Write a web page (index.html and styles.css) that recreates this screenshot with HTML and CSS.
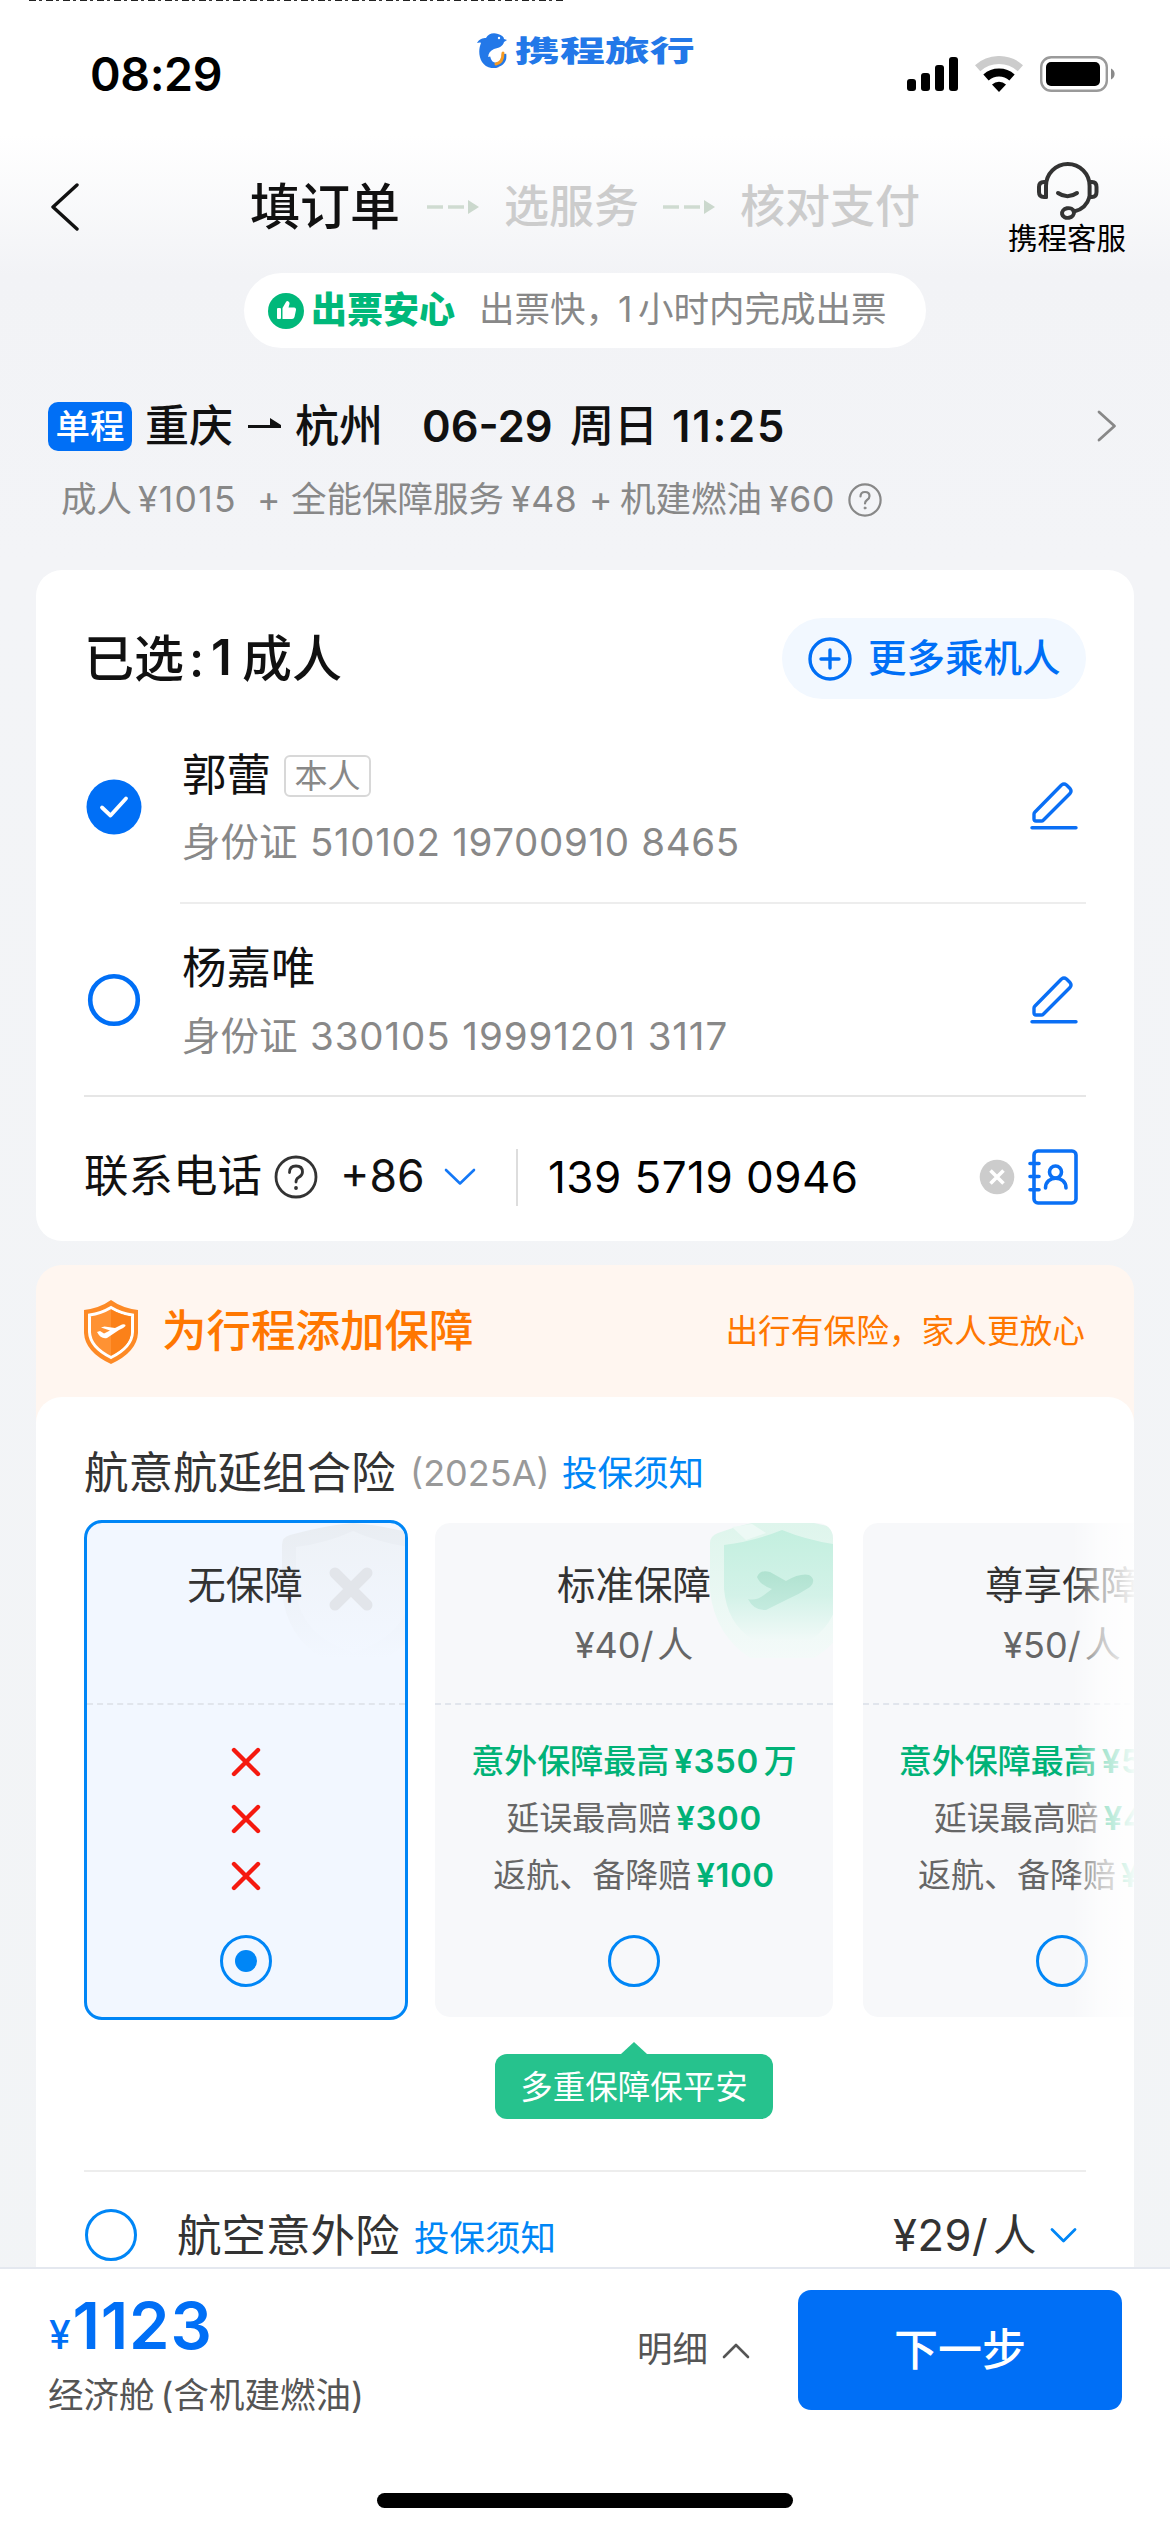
FILE: index.html
```html
<!DOCTYPE html>
<html lang="zh-CN">
<head>
<meta charset="utf-8">
<title>填订单</title>
<link rel="stylesheet" href="styles.css">
</head>
<body>
<div class="screen">
  <div class="top-strip"></div>
  <header class="status">
    <div class="time">08:29</div>
    <div class="brand">
      <svg width="31" height="35" viewBox="0 0 31 35">
        <path d="M0 10C2 6 6 5 9 5C11 1 16-1 21 1C25 2 27 4 27 6L30 7L27 9C26 13 22 15 17 16C12 18 10 23 12 27C13 30 16 31 19 31L22 34C16 37 8 34 5 29C1 22 2 15 4 10C3 9 1 10 0 10Z" fill="#2378e8"/>
        <path d="M11 24C12 29 15 32 19 32C25 31 28 27 27 21" fill="none" stroke="#2378e8" stroke-width="4.5"/>
        <path d="M19 31C24 30 26 26 26 20" fill="none" stroke="#f59a23" stroke-width="3" stroke-linecap="round"/>
        <circle cx="22" cy="5" r="1.2" fill="#fff"/>
      </svg>
      <span class="brand-name">携程旅行</span>
    </div>
    <div class="indicators">
      <svg width="52" height="36" viewBox="0 0 52 36"><rect x="0" y="23" width="9" height="12" rx="3"/><rect x="14" y="17" width="9" height="18" rx="3"/><rect x="28" y="9" width="9" height="26" rx="3"/><rect x="42" y="1" width="9" height="34" rx="3"/></svg>
      <svg width="48" height="36" viewBox="0 0 48 36" fill="none" stroke="#000" stroke-width="8"><path d="M2.6 12.2A32 32 0 0 1 45.4 12.2" stroke="#ccc"/><path d="M11 21.5A19.5 19.5 0 0 1 37 21.5"/><path d="M24 36L17 28.4A10.5 10.5 0 0 1 31 28.4Z" fill="#000" stroke="none"/></svg>
      <svg width="76" height="36" viewBox="0 0 76 36"><rect x="1.2" y="1.2" width="65.6" height="33.6" rx="10" fill="none" stroke="#9a9a9a" stroke-width="2.4"/><rect x="6" y="6" width="54" height="24" rx="5"/><path d="M71 12.5A6 6 0 0 1 71 23.5Z" fill="#8a8a8a"/></svg>
    </div>
  </header>

  <nav class="nav">
    <svg class="back" width="30" height="48" viewBox="0 0 30 48"><path d="M27 2L3 24L27 46" fill="none" stroke="#111" stroke-width="3.4" stroke-linecap="round" stroke-linejoin="round"/></svg>
    <span class="step step-on">填订单</span>
    <svg width="52" height="16" viewBox="0 0 52 16"><path d="M0 8H16M21 8H37" stroke="#cfdbd1" stroke-width="3.4"/><path d="M41 1L52 8L41 15Z" fill="#cbd8cd"/></svg>
    <span class="step">选服务</span>
    <svg width="52" height="16" viewBox="0 0 52 16"><path d="M0 8H16M21 8H37" stroke="#cfdbd1" stroke-width="3.4"/><path d="M41 1L52 8L41 15Z" fill="#cbd8cd"/></svg>
    <span class="step">核对支付</span>
    <div class="service">
      <svg width="64" height="60" viewBox="0 0 64 60" fill="none" stroke="#333" stroke-width="4" stroke-linecap="round" stroke-linejoin="round"><path d="M10 36V25A21.8 22 0 0 1 53.6 25V36"/><path d="M10 21H8Q3 21 3 26V31Q3 36 8 36H10M54 21H56Q60.5 21 60.5 26V31Q60.5 36 56 36H54"/><path d="M22 32Q31.5 38.500 41 32"/><path d="M53.500 36Q50 48 38 50.500"/><ellipse cx="32" cy="52" rx="6" ry="4.800" transform="rotate(-12 32 52)"/></svg>
      <span>携程客服</span>
    </div>
  </nav>

  <div class="promise">
    <svg width="36" height="36" viewBox="0 0 36 36"><circle cx="18" cy="18" r="18" fill="#00b87a"/><rect x="9" y="15" width="4" height="11" rx="1" fill="#fff"/><path d="M14.500 15L18 9Q19 7.500 20.500 8.500Q22 9.500 21.500 11L20.500 14.500H26Q28.500 15 28 17L26.500 24Q26 26 24 26H14.500Z" fill="#fff"/></svg>
    <b>出票安心</b>
    <span>出票快，<i>1</i>小时内完成出票</span>
  </div>

  <div class="trip">
    <span class="badge">单程</span>
    <span class="city">重庆</span>
    <svg width="34" height="16" viewBox="0 0 34 16"><path d="M0 10H33V7L22 0V7H0Z" fill="#111"/></svg>
    <span class="city">杭州</span>
    <span class="date">06-29</span>
    <span class="city">周日</span>
    <span class="date clock">11:25</span>
    <svg class="go" width="20" height="32" viewBox="0 0 20 32"><path d="M2 2L17.500 16L2 30" fill="none" stroke="#888" stroke-width="2.800" stroke-linecap="round" stroke-linejoin="round"/></svg>
  </div>
  <div class="fare">
    <span>成人</span><span class="yen wide">¥1015</span><span>+</span><span>全能保障服务</span><span class="yen">¥48</span><span>+</span><span>机建燃油</span><span class="yen">¥60</span>
    <svg width="34" height="34" viewBox="0 0 34 34" fill="none" stroke="#888" stroke-width="2.200" stroke-linecap="round"><circle cx="17" cy="17" r="15.600"/><path d="M12.500 13.500Q12.500 9 17 9Q21.500 9 21.500 13Q21.500 15.500 19 17Q17 18.300 17 20.500"/><circle cx="17" cy="25" r="1" fill="#888" stroke-width="1"/></svg>
  </div>

  <section class="card people">
    <div class="people-head">
      <h2><span>已选</span><span>:</span><span>1</span><span>成人</span></h2>
      <div class="more">
        <svg width="44" height="44" viewBox="0 0 44 44" fill="none" stroke="#006ff6" stroke-width="3.400" stroke-linecap="round"><circle cx="22" cy="22" r="20"/><path d="M22 13V31M13 22H31"/></svg>
        <span>更多乘机人</span>
      </div>
    </div>
    <div class="person">
      <svg class="mark" width="56" height="56" viewBox="0 0 56 56"><circle cx="28" cy="28" r="27.500" fill="#006ff6"/><path d="M16 28.500L24.500 36.500L40 19.500" fill="none" stroke="#fff" stroke-width="3.800" stroke-linecap="round" stroke-linejoin="round"/></svg>
      <div class="person-main inset-line">
        <div class="person-text">
          <div class="name">郭蕾<span class="self">本人</span></div>
          <div class="idno"><span>身份证</span><span class="idnum first">510102 19700910 8465</span></div>
        </div>
        <svg class="pen" width="48" height="48" viewBox="0 0 48 48" fill="none" stroke="#0a6ff5" stroke-width="3.400" stroke-linecap="round" stroke-linejoin="round"><path d="M4 37V32Q4 31 5 30L31.500 3Q34 1 36.500 3L40 6.500Q42 9 40 11.500L13.500 38Q12.500 39 11.500 39H6Q4 39 4 37Z"/><path d="M2 45.800H46"/></svg>
      </div>
    </div>
    <div class="person full-line">
      <svg class="mark" width="56" height="56" viewBox="0 0 56 56"><circle cx="28" cy="28" r="23.800" fill="#fff" stroke="#006ff6" stroke-width="4.600"/></svg>
      <div class="person-main">
        <div class="person-text">
          <div class="name">杨嘉唯</div>
          <div class="idno"><span>身份证</span><span class="idnum second">330105 19991201 3117</span></div>
        </div>
        <svg class="pen" width="48" height="48" viewBox="0 0 48 48" fill="none" stroke="#0a6ff5" stroke-width="3.400" stroke-linecap="round" stroke-linejoin="round"><path d="M4 37V32Q4 31 5 30L31.500 3Q34 1 36.500 3L40 6.500Q42 9 40 11.500L13.500 38Q12.500 39 11.500 39H6Q4 39 4 37Z"/><path d="M2 45.800H46"/></svg>
      </div>
    </div>
    <div class="contact">
      <span>联系电话</span>
      <svg width="44" height="44" viewBox="0 0 44 44" fill="none" stroke="#333" stroke-width="2.800" stroke-linecap="round"><circle cx="22" cy="22" r="20"/><path d="M15.500 17.500Q15.500 11 22 11Q28.500 11 28.500 17Q28.500 20.500 24.500 22.500Q22 24 22 27"/><circle cx="22" cy="33" r="1.200" fill="#333" stroke-width="1.400"/></svg>
      <span>+86</span>
      <svg width="32" height="18" viewBox="0 0 32 18"><path d="M2 2L16 15.500L30 2" fill="none" stroke="#1478f6" stroke-width="2.600" stroke-linecap="round" stroke-linejoin="round"/></svg>
      <span class="bar"></span>
      <span class="phone">139 5719 0946</span>
      <svg width="36" height="36" viewBox="0 0 36 36"><circle cx="18" cy="18" r="17.300" fill="#ccc"/><path d="M11.500 11.500L24.500 24.500M24.500 11.500L11.500 24.500" stroke="#fff" stroke-width="3.600"/></svg>
      <svg width="52" height="58" viewBox="0 0 52 58" fill="none" stroke="#0a70f5" stroke-width="3.600" stroke-linecap="round"><rect x="6" y="3" width="42" height="52" rx="4"/><path d="M2 15.500H11M2 28.500H11M2 41.800H11"/><circle cx="27.500" cy="24" r="6"/><path d="M17.500 40C17.500 27 38 27 38 40"/></svg>
    </div>
  </section>

  <section class="card cover">
    <div class="cover-head">
      <svg width="54" height="64" viewBox="0 0 54 64">
        <path d="M27 0Q38 8 54 10V33Q53 52 27 64Q1 52 0 33V10Q16 8 27 0Z" fill="#fd8a26"/>
        <path d="M27 7.500Q37 13.500 48.500 15V32Q48 47 27 57.500Q6 47 5.500 32V15Q17 13.500 27 7.500Z" fill="#ff9233" stroke="#fff" stroke-width="3"/>
        <path d="M27 9.500Q37 15 47 16.500V32Q46.500 46 27 55.500Z" fill="#fb8119"/>
        <path d="M13 32L16 31L20 33.500L26 30.500L17 27.500L20.500 26.500L31 28L38 24.500Q42 23.500 41.500 26Q40 28 35 30L23 38Q17 39.500 13 32Z" fill="#fff"/>
      </svg>
      <h3>为行程添加保障</h3>
      <p>出行有保险，家人更放心</p>
    </div>
    <div class="cover-body">
      <div class="combo">
        <span class="combo-name">航意航延组合险</span>
        <span class="combo-code">(2025A)</span>
        <span class="link">投保须知</span>
      </div>
      <div class="plans">
        <article class="plan plan-on">
          <svg class="crest crest-grey" width="144" height="138" viewBox="0 0 144 138">
            <defs><linearGradient id="g1" x1="0" y1="0" x2="0" y2="1"><stop offset="0" stop-color="#e9edf2"/><stop offset="1" stop-color="#f2f7ff"/></linearGradient><linearGradient id="g2" x1="0" y1="0" x2="0" y2="1"><stop offset="0" stop-color="#eef2f7"/><stop offset="1" stop-color="#f2f7ff"/></linearGradient></defs>
            <path d="M0 22Q0 14 8 12Q45 2 71 0Q100 2 136 12Q143 14 143 22V70Q140 120 100 136H42Q5 115 0 70Z" fill="url(#g1)"/>
            <path d="M14 24Q45 20 71 8Q97 20 129 24V68Q126 112 71 130Q18 112 14 68Z" fill="url(#g2)"/>
            <path d="M53 50L85 82M85 50L53 82" stroke="#e2e5ea" stroke-width="11" stroke-linecap="round"/>
          </svg>
          <div class="plan-head"><div class="plan-name">无保障</div></div>
          <ul class="plan-list">
            <li><svg width="30" height="30" viewBox="0 0 30 30"><path d="M3 3L27 27M27 3L3 27" stroke="#f5190f" stroke-width="4.400" stroke-linecap="round"/></svg></li>
            <li><svg width="30" height="30" viewBox="0 0 30 30"><path d="M3 3L27 27M27 3L3 27" stroke="#f5190f" stroke-width="4.400" stroke-linecap="round"/></svg></li>
            <li><svg width="30" height="30" viewBox="0 0 30 30"><path d="M3 3L27 27M27 3L3 27" stroke="#f5190f" stroke-width="4.400" stroke-linecap="round"/></svg></li>
          </ul>
          <span class="radio radio-on"></span>
        </article>
        <article class="plan">
          <svg class="crest crest-green" width="144" height="138" viewBox="0 0 144 138">
            <defs><linearGradient id="g3" x1="0" y1="0" x2="0" y2="1"><stop offset="0" stop-color="#def5ec"/><stop offset="1" stop-color="#f4faf9"/></linearGradient><linearGradient id="g4" x1="0" y1="0" x2="0" y2="1"><stop offset="0" stop-color="#c3efdf"/><stop offset=".6" stop-color="#d3f2e8"/><stop offset="1" stop-color="#f0f9f7"/></linearGradient><linearGradient id="g5" x1="0" y1="0" x2="0" y2="1"><stop offset="0" stop-color="#b0e2d0"/><stop offset="1" stop-color="#c4ebdf"/></linearGradient></defs>
            <path d="M0 20Q0 13 8 10Q24 4 42 0H104Q124 4 136 10Q144 13 144 20V68Q140 114 104 135H40Q5 112 0 68Z" fill="url(#g3)"/>
            <path d="M14 22Q45 18 72 7Q99 18 130 22V66Q126 100 102 116H42Q17 100 14 66Z" fill="url(#g4)"/>
            <path d="M22 4L42 1L56 10L36 17Z" fill="#edf9f5"/>
            <path d="M38 76Q46 78 54 72L62 66Q50 62 47 54Q50 46 60 49L76 58Q90 50 99 52Q107 57 100 64Q88 72 76 77L56 87Q44 88 38 76Z" fill="url(#g5)"/>
          </svg>
          <div class="plan-head"><div class="plan-name">标准保障</div><div class="plan-price">¥40/<span>人</span></div></div>
          <ul class="plan-list">
            <li class="lead">意外保障最高<b>¥350</b>万</li>
            <li>延误最高赔<b>¥300</b></li>
            <li>返航、备降赔<b>¥100</b></li>
          </ul>
          <span class="radio"></span>
        </article>
        <article class="plan">
          <div class="plan-head"><div class="plan-name">尊享保障</div><div class="plan-price">¥50/<span>人</span></div></div>
          <ul class="plan-list">
            <li class="lead">意外保障最高<b>¥500</b>万</li>
            <li>延误最高赔<b>¥400</b></li>
            <li>返航、备降赔<b>¥200</b></li>
          </ul>
          <span class="radio"></span>
        </article>
        <div class="fade"></div>
      </div>
      <div class="tip"><span>多重保障保平安</span></div>
      <div class="single">
        <span class="radio"></span>
        <span class="single-name">航空意外险</span>
        <span class="link">投保须知</span>
        <span class="single-price">¥29/<i>人</i></span>
        <svg width="27" height="18" viewBox="0 0 27 18"><path d="M2 2.500L13.500 14L25 2.500" fill="none" stroke="#0086f6" stroke-width="2.800" stroke-linecap="round" stroke-linejoin="round"/></svg>
      </div>
    </div>
  </section>

  <footer class="pay">
    <div class="total">
      <div class="amount"><small>¥</small>1123</div>
      <div class="cabin">经济舱<span>(</span>含机建燃油<span>)</span></div>
    </div>
    <div class="detail">明细<svg width="28" height="17" viewBox="0 0 28 17"><path d="M2 15L14 3L26 15" fill="none" stroke="#555" stroke-width="2.600" stroke-linecap="round" stroke-linejoin="round"/></svg></div>
    <div class="next">下一步</div>
    <div class="home"></div>
  </footer>
</div>
</body>
</html>
```
FILE: styles.css
```css
* { box-sizing: border-box; }
body, h2, h3, p, ul { margin: 0; padding: 0; }
ul { list-style: none; }
i { font-style: normal; }
svg { display: block; flex: none; }
body {
  font-family: "Inter", "Noto Sans CJK SC", sans-serif;
  line-height: 1.2;
  color: #111;
  background: #fff;
}
.screen {
  position: relative;
  width: 1170px;
  height: 2532px;
  overflow: hidden;
  white-space: nowrap;
  background: linear-gradient(#fff 0, #fff 135px, #f2f3f6 275px, #f3f4f7 560px, #f2f4f6 100%);
}
.top-strip {
  position: absolute;
  left: 29px;
  top: 0;
  width: 536px;
  height: 1px;
  background: repeating-linear-gradient(90deg, #222 0 7px, #fff 7px 10px, #333 10px 13px, #fff 13px 17px);
}

/* status bar */
.status { display: grid; grid-template-columns: 387px 430px 1fr; height: 136px; padding-left: 90px; }
.time { height: 60px; margin-top: 44px; line-height: 60px; font-size: 46.5px; font-weight: 600; color: #000; letter-spacing: -.4px; }
.brand { display: flex; height: 35px; margin-top: 33px; align-items: center; gap: 7px; }
.brand-name { margin-top: -4px; font: 900 29px/30px "Noto Sans CJK SC", sans-serif; color: #2378e8; transform: scaleX(1.55); transform-origin: left; }
.indicators { display: flex; margin-top: 56px; gap: 16px; }
.indicators svg:last-child { margin-left: 1px; }

/* steps */
.nav { display: grid; grid-template-columns: 200px 177px 77px 159px 77px 267px 120px; align-items: center; height: 137px; padding: 5px 0 0 50px; }
.step { font-size: 45px; font-weight: 500; color: #ccc; }
.step-on { font-size: 50px; color: #111; }
.service { display: flex; flex-direction: column; align-items: center; font-size: 29.5px; line-height: 30px; color: #000; }
.service svg { margin: 0 0 2px 2px; }

/* promise pill */
.promise { display: flex; align-items: center; width: 682px; height: 75px; margin: 0 auto; padding-left: 24px; border-radius: 38px; background: #fff; font-size: 35.5px; color: #888; }
.promise b { width: 168px; margin-left: 7px; font-size: 36px; font-weight: 900; color: #00b87a; }
.promise i { display: inline-block; width: 20px; margin-left: -3px; }

/* trip */
.trip { display: grid; grid-template-columns: 97px 103px 47px 127px 148px 102px 425px 1fr; align-items: center; height: 50px; margin-top: 52px; padding-left: 48px; font-size: 44px; }
.badge { width: 84px; height: 49px; border-radius: 10px; background: #006ff6; color: #fff; font-size: 34.5px; font-weight: 500; line-height: 49px; text-align: center; }
.city { font-weight: 500; }
.date { font-size: 43.5px; font-weight: 600; }
.clock { letter-spacing: 1.8px; }
.fare { display: grid; grid-template-columns: 77px 119px 34px 220px 78px 31px 149px 79px 34px; align-items: center; height: 60px; margin-top: 20px; padding-left: 61px; font-size: 35.5px; color: #888; }
.yen { letter-spacing: .7px; }
.yen.wide { letter-spacing: 1.3px; }

.card { margin: 0 36px; border-radius: 26px; background: #fff; overflow: hidden; }

/* passengers */
.people { height: 671px; margin-top: 40px; padding: 48px 48px 0; }
.people-head { display: flex; justify-content: space-between; align-items: center; height: 81px; margin-bottom: 11px; }
.people-head h2 { display: grid; grid-template-columns: 105px 22px 31px auto; align-items: center; font-size: 50px; font-weight: 500; }
.people-head h2 span:nth-child(3) { font-weight: 600; font-size: 49px; }
.more { display: flex; align-items: center; gap: 16px; width: 304px; height: 81px; padding-left: 26px; border-radius: 41px; background: #f2f8ff; color: #006ff6; font-size: 38.5px; font-weight: 500; }
.person { display: grid; grid-template-columns: 96px 1fr; align-items: center; height: 194px; }
.mark { margin-left: 2px; }
.person-main { display: flex; justify-content: space-between; align-items: center; height: 194px; padding: 0 8px 0 2px; }
.inset-line { border-bottom: 2px solid #ededed; }
.full-line { height: 193px; border-bottom: 2px solid #e6e6e6; }
.full-line .person-main { height: 191px; }
.person-text { padding-top: 6px; }
.name { display: flex; align-items: center; height: 67px; font-size: 44.5px; }
.self { width: 87px; height: 42px; margin-left: 13px; border: 2px solid #d8d8d8; border-radius: 6px; color: #888; font-size: 33px; line-height: 38px; text-align: center; }
.idno { display: grid; grid-template-columns: 128px auto; height: 67px; line-height: 67px; font-size: 38.5px; color: #888; }
.idnum.first { letter-spacing: .65px; }
.idnum.second { letter-spacing: .9px; }
.contact { display: grid; grid-template-columns: 190px 66px 104px 72px 32px 431px 49px 52px; align-items: center; height: 144px; padding: 16px 0 0 0; font-size: 44.5px; }
.contact .bar { width: 2px; height: 57px; background: #ddd; }
.contact .phone { font-size: 44px; letter-spacing: .45px; color: #000; }

/* cover */
.cover { height: 1002px; margin-top: 24px; border-radius: 26px 26px 0 0; background: #fff6f0; color: #333; }
.cover-head { display: flex; align-items: center; height: 132px; padding: 2px 49px 0 48px; color: #ff7700; }
.cover-head h3 { margin-left: 24px; font-size: 44.5px; font-weight: 500; }
.cover-head p { margin-left: auto; font-size: 32.7px; }
.cover-body { height: 870px; border-radius: 26px 26px 0 0; background: #fff; overflow: hidden; }
.combo { display: grid; grid-template-columns: 326px 152px auto; align-items: center; height: 123px; padding: 31px 0 0 48px; }
.combo-name, .single-name { font-size: 44.5px; }
.combo-code { font-size: 36px; color: #999; }
.link { font-size: 35.5px; color: #0086f6; }
.plans { position: relative; display: flex; height: 500px; padding-left: 48px; overflow: hidden; }
.plan { position: relative; flex: none; display: flex; flex-direction: column; align-items: center; width: 398px; height: 494px; margin: 3px 30px 0 0; border-radius: 15px; background: #f7f8fa; overflow: hidden; }
.plan-on { width: 324px; height: 500px; margin: 0 27px 0 0; border: 3px solid #0086f6; border-radius: 18px; background: #f2f7ff; }
.crest { position: absolute; top: 0; }
.crest-grey { left: 195px; }
.crest-green { left: 275px; }
.plan-head { position: relative; width: 100%; height: 182px; padding-top: 32px; line-height: 60px; text-align: center; border-bottom: 2px dashed #e1e5ec; }
.plan-name { font-size: 38.5px; }
.plan-on .plan-name { margin-left: -2px; }
.plan-price { font-size: 36px; color: #666; }
.plan-price span { margin-left: 4px; }
.plan-list { padding-top: 28px; font-size: 33px; line-height: 57px; text-align: center; color: #666; }
.plan-list li { height: 57px; }
.plan-on li { display: flex; align-items: center; }
.plan-list b { margin: 0 0 0 5px; font-weight: 600; color: #00b277; letter-spacing: .6px; }
.plan-list .lead { color: #00b277; font-weight: 500; }
.lead b { margin-right: 5px; }
.radio { position: relative; flex: none; width: 52px; height: 52px; margin-top: 31px; border: 3px solid #0086f6; border-radius: 50%; }
.radio-on::after { content: ""; position: absolute; inset: 12px; border-radius: 50%; background: #0086f6; }
.fade { position: absolute; right: 0; top: 0; width: 62px; height: 500px; background: linear-gradient(90deg, rgba(255,255,255,0), rgba(255,255,255,.62) 45%, rgba(255,255,255,.95)); }
.tip { position: relative; width: 278px; height: 65px; margin: 34px 0 51px 459px; border-radius: 12px; background: #26c28d; color: #fff; font-size: 32.5px; line-height: 67px; text-align: center; }
.tip::before { content: ""; position: absolute; left: 126px; top: -12px; border: 13px solid transparent; border-top: 0; border-bottom: 12px solid #26c28d; }
.single { display: grid; grid-template-columns: 93px 237px 479px 157px auto; align-items: center; height: 132px; margin: 0 48px; border-top: 2px solid #ededed; }
.single .radio { margin: -5px 0 0 1px; }
.single .link { padding-top: 4px; }
.single-price { margin-top: -3px; font-size: 43.5px; letter-spacing: .5px; }
.single-price i { margin-left: 5px; }
.single svg { margin-top: -3px; }

/* footer */
.pay { display: grid; grid-template-columns: 588px 160px 325px; align-items: start; position: relative; height: 265px; padding: 21px 0 0 49px; border-top: 2px solid #e4e8ef; background: #fff; }
.amount { height: 72px; line-height: 72px; font-size: 65px; font-weight: 600; color: #006ff6; letter-spacing: .8px; }
.amount small { margin-right: 1px; font-size: 39px; font-weight: 500; }
.cabin { height: 66px; margin-left: -1px; line-height: 68px; font-size: 35.5px; color: #555; }
.cabin span:first-child { margin-left: 6px; }
.detail { display: flex; align-items: center; gap: 14px; height: 120px; font-size: 35.5px; color: #555; }
.next { height: 120px; border-radius: 13px; background: #006ff6; color: #fff; font-size: 44px; font-weight: 500; line-height: 120px; text-align: center; margin-left: 1px; }
.home { position: absolute; left: 377px; bottom: 24px; width: 416px; height: 15px; border-radius: 8px; background: #000; }
```
